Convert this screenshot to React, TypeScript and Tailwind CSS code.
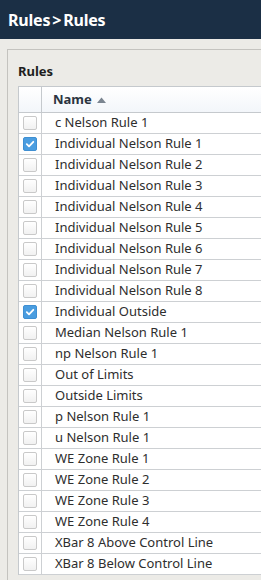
import React, { useState } from "react";

const rules = [
  "c Nelson Rule 1",
  "Individual Nelson Rule 1",
  "Individual Nelson Rule 2",
  "Individual Nelson Rule 3",
  "Individual Nelson Rule 4",
  "Individual Nelson Rule 5",
  "Individual Nelson Rule 6",
  "Individual Nelson Rule 7",
  "Individual Nelson Rule 8",
  "Individual Outside",
  "Median Nelson Rule 1",
  "np Nelson Rule 1",
  "Out of Limits",
  "Outside Limits",
  "p Nelson Rule 1",
  "u Nelson Rule 1",
  "WE Zone Rule 1",
  "WE Zone Rule 2",
  "WE Zone Rule 3",
  "WE Zone Rule 4",
  "XBar 8 Above Control Line",
  "XBar 8 Below Control Line",
];

function Checkbox({ checked, onClick }: { checked: boolean; onClick: () => void }) {
  return (
    <button
      onClick={onClick}
      className={`w-[14px] h-[14px] rounded-[2px] flex items-center justify-center ${
        checked
          ? "bg-[#4a9de0] border border-[#3f8fd2]"
          : "bg-gradient-to-b from-white to-[#f1f1f1] border border-[#c9c9c9]"
      }`}
    >
      {checked && (
        <svg width="10" height="10" viewBox="0 0 10 10">
          <path d="M1.8 5.2 L4 7.3 L8.3 2.8" fill="none" stroke="white" strokeWidth="1.8" strokeLinecap="round" strokeLinejoin="round" />
        </svg>
      )}
    </button>
  );
}

export default function App() {
  const [checked, setChecked] = useState<string[]>([
    "Individual Nelson Rule 1",
    "Individual Outside",
  ]);

  const toggle = (r: string) =>
    setChecked((c) => (c.includes(r) ? c.filter((x) => x !== r) : [...c, r]));

  return (
    <div className="w-[261px] h-[580px] overflow-hidden bg-[#ecebe7] font-['Noto_Sans',sans-serif]">
      {/* Title bar */}
      <div className="h-[39px] bg-[#1b2f45] flex items-center pl-[8px] gap-[2px] text-white font-bold text-[16px] tracking-[-0.2px]">
        <span>Rules</span>
        <span>&gt;</span>
        <span>Rules</span>
      </div>

      {/* Panel */}
      <div className="mt-[10px] ml-[7px] border-l border-t border-[#c4c3bf] pl-[10px] pt-[11px] h-[600px]">
        <div className="text-[13px] font-bold text-[#1e1e1e] h-[25px] leading-[20px]">Rules</div>

        <div className="border-l border-t border-[#c5c9cd] bg-white">
          {/* Header */}
          <div className="flex h-[26px] border-b border-[#c5c9cd] bg-gradient-to-b from-white to-[#f3f6fa]">
            <div className="w-[23px] border-r border-[#c5c9cd]" />
            <div className="flex items-center pl-[11px] gap-[5px] text-[13px] font-bold text-[#2b3440]">
              Name
              <svg width="9" height="6" viewBox="0 0 9 6">
                <path d="M0 6 L4.5 0.5 L9 6 Z" fill="#7b8590" />
              </svg>
            </div>
          </div>

          {/* Rows */}
          {rules.map((r) => (
            <div key={r} className="flex h-[21px] border-b border-[#cdd0d3]">
              <div className="w-[23px] border-r border-[#cdd0d3] flex items-center justify-center">
                <Checkbox checked={checked.includes(r)} onClick={() => toggle(r)} />
              </div>
              <div className="flex items-center pl-[13px] text-[13px] text-[#2e2e2e]">{r}</div>
            </div>
          ))}
        </div>
      </div>
    </div>
  );
}
